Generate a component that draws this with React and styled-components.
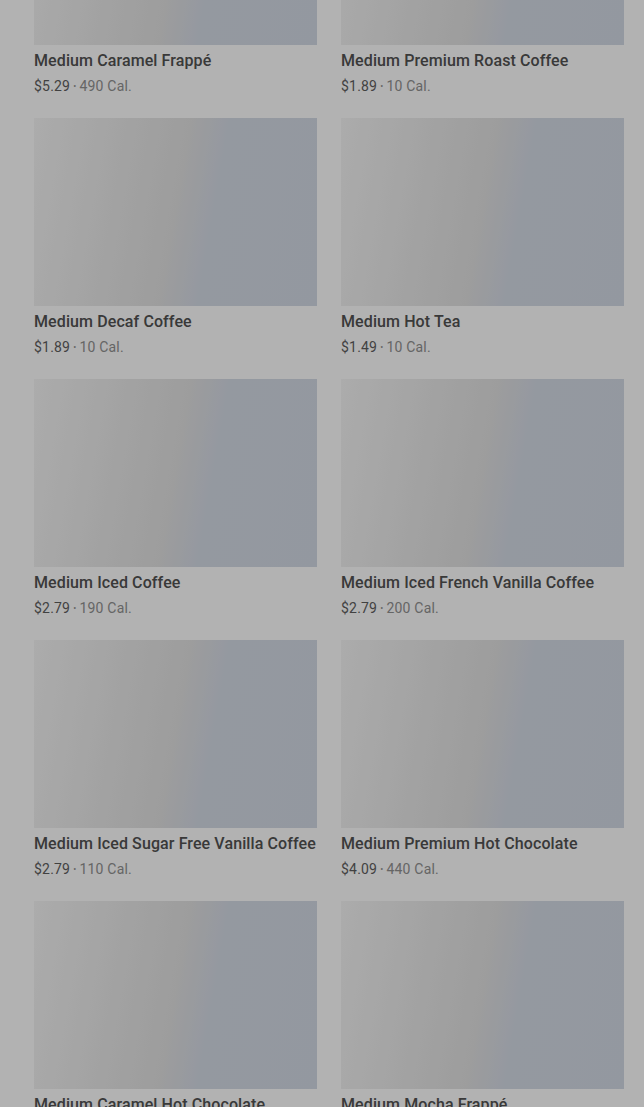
import React from 'react'
import styled, { createGlobalStyle } from 'styled-components'

const GlobalStyle = createGlobalStyle`
  html, body {
    margin: 0;
    padding: 0;
    background: #ffffff;
    overflow: hidden;
    height: 1107px;
  }
  body {
    font-family: Roboto, "Noto Sans", Arial, sans-serif;
  }
`

const Page = styled.div`
  width: 644px;
  height: 1107px;
  overflow: hidden;
  position: relative;
`

const Grid = styled.div`
  display: grid;
  grid-template-columns: 283px 283px;
  column-gap: 24px;
  row-gap: 22px;
  padding: 0 20px 0 34px;
  margin-top: -143px;
`

const Card = styled.div`
  display: flex;
  flex-direction: column;
`

const Thumb = styled.div`
  height: 188px;
  background: linear-gradient(100deg, #f6f6f6 0%, #e9e9e9 30%, #e1e1e1 50%, #d5dbe6 62%, #d3dae6 100%);
`

const Title = styled.div`
  margin-top: 6px;
  font-size: 16px;
  line-height: 20px;
  font-weight: 500;
  letter-spacing: 0.1px;
  color: #525252;
  white-space: nowrap;
`

const Meta = styled.div`
  margin-top: 5px;
  font-size: 14px;
  line-height: 20px;
  letter-spacing: 0.2px;
  color: #919191;
  display: flex;
  align-items: center;
  gap: 3px;
`

const Price = styled.span`
  color: #5e5e5e;
`

const Dot = styled.span`
  font-size: 9px;
`

const Backdrop = styled.div`
  position: absolute;
  inset: 0;
  background: rgba(0, 0, 0, 0.3);
`

const items = [
  ['Medium Caramel Frappé', '$5.29', '490'],
  ['Medium Premium Roast Coffee', '$1.89', '10'],
  ['Medium Decaf Coffee', '$1.89', '10'],
  ['Medium Hot Tea', '$1.49', '10'],
  ['Medium Iced Coffee', '$2.79', '190'],
  ['Medium Iced French Vanilla Coffee', '$2.79', '200'],
  ['Medium Iced Sugar Free Vanilla Coffee', '$2.79', '110'],
  ['Medium Premium Hot Chocolate', '$4.09', '440'],
  ['Medium Caramel Hot Chocolate', '$4.29', '460'],
  ['Medium Mocha Frappé', '$5.29', '500'],
]

function App() {
  return (
    <>
      <GlobalStyle />
      <Page>
        <Grid>
          {items.map(([name, price, cal]) => (
            <Card key={name}>
              <Thumb />
              <Title>{name}</Title>
              <Meta>
                <Price>{price}</Price>
                <Dot>•</Dot>
                <span>{cal} Cal.</span>
              </Meta>
            </Card>
          ))}
        </Grid>
        <Backdrop />
      </Page>
    </>
  )
}

export default App
